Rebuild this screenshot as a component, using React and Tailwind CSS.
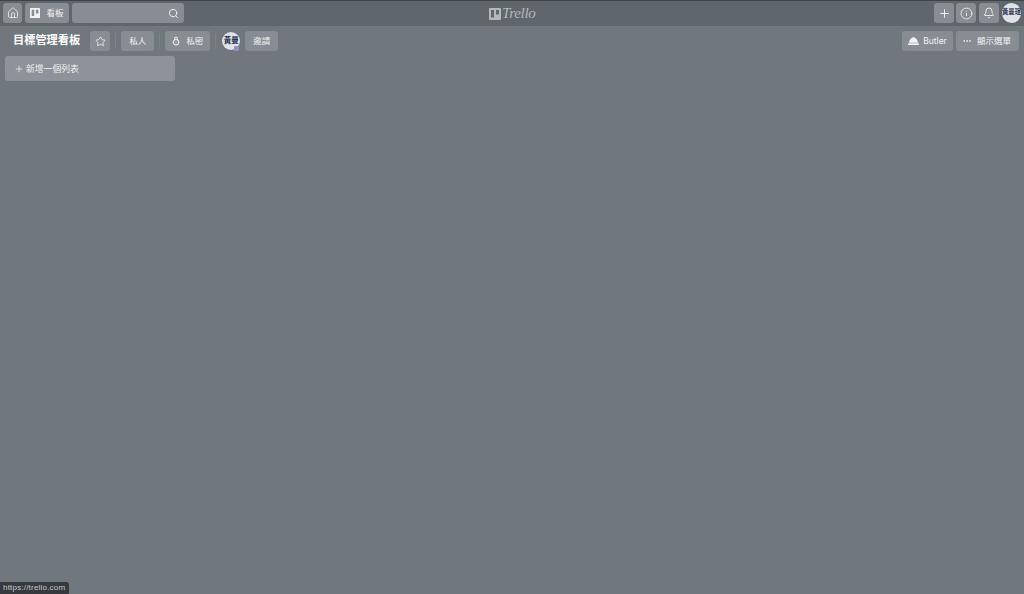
import React from 'react';
import { Home, Search, Star, Plus, Info, Bell, Ellipsis } from 'lucide-react';

const cjk = "font-['Inter','Noto_Sans_CJK_TC',sans-serif]";

const BarButton = ({ className = '', children }) => (
  <div className={`h-5 rounded-[3px] bg-[#878d92] flex items-center justify-center text-[#f1f2f3] ${className}`}>{children}</div>
);

const Divider = () => <div className="w-px h-4 bg-[#7d8489] mx-[5px]" />;

const BoardGlyph = ({ className }) => (
  <svg viewBox="0 0 12 12" className={className}>
    <path fill="currentColor" fillRule="evenodd" d="M1 0h10a1 1 0 0 1 1 1v10a1 1 0 0 1-1 1H1a1 1 0 0 1-1-1V1a1 1 0 0 1 1-1zM2 2v7.5h3V2zm5 0v4.5h3V2z" />
  </svg>
);

const LockGlyph = () => (
  <svg viewBox="0 0 10 12" className="w-[8px] h-[10px]" fill="none" stroke="currentColor" strokeWidth="1.3">
    <path d="M3.2 4.6V3a1.8 1.8 0 0 1 3.6 0v1.6" />
    <circle cx="5" cy="7.6" r="3.4" />
    <circle cx="5" cy="7.6" r="0.7" fill="currentColor" stroke="none" />
  </svg>
);

const Avatar = ({ className = '', text, children }) => (
  <div className={`relative rounded-full bg-[#dfe1e6] flex items-center justify-center font-bold text-[#1d2a4d] whitespace-nowrap ${className}`}>
    <span>{text}</span>
    {children}
  </div>
);

const App = () => {
  return (
    <div className={`relative w-full h-[594px] overflow-hidden bg-[#70787e] ${cjk}`}>
      <header className="relative h-[26px] bg-[#5f666c] border-t border-[#3e444a] flex items-start justify-between pt-[2px] pl-[3px] pr-[3px]">
        <div className="flex items-center">
          <BarButton className="w-[19px]"><Home className="w-3 h-3" strokeWidth={1.6} /></BarButton>
          <BarButton className="w-[44px] gap-[6px] ml-[3px]">
            <BoardGlyph className="w-[10px] h-[10px]" />
            <span className="text-[8.5px] leading-none">看板</span>
          </BarButton>
          <BarButton className="w-[112px] ml-[3px] justify-end pr-[5px]"><Search className="w-[11px] h-[11px]" strokeWidth={2} /></BarButton>
        </div>
        <div className="absolute left-[489px] top-[5px] flex items-center gap-[1px] text-[#b4b9bc]">
          <BoardGlyph className="w-3 h-3" />
          <span className="font-['Liberation_Serif',serif] italic text-[15px] leading-none tracking-[-0.3px]">Trello</span>
        </div>
        <div className="flex items-center">
          <BarButton className="w-5"><Plus className="w-[13px] h-[13px]" strokeWidth={1.8} /></BarButton>
          <BarButton className="w-5 ml-[2px]"><Info className="w-[13px] h-[13px]" strokeWidth={1.6} /></BarButton>
          <BarButton className="w-5 ml-[3px]"><Bell className="w-3 h-3" strokeWidth={1.8} /></BarButton>
          <Avatar className="w-[19px] h-5 ml-[3px] text-[6.3px]" text="黃曼瑄" />
        </div>
      </header>

      <div className="h-[25px] flex items-end justify-between pl-[13px] pr-[5px]">
        <div className="flex items-center">
          <h1 className="text-[11.2px] font-bold text-white leading-none mr-[10px] whitespace-nowrap">目標管理看板</h1>
          <BarButton className="w-5"><Star className="w-[11px] h-[11px]" strokeWidth={1.8} /></BarButton>
          <Divider />
          <BarButton className="w-[33px] text-[8.5px]">私人</BarButton>
          <Divider />
          <BarButton className="w-[45px] gap-[6px] text-[8.5px]">
            <LockGlyph />
            <span>私密</span>
          </BarButton>
          <Divider />
          <Avatar className="w-[18px] h-[18px] text-[7.5px] ml-[1px] mr-[5px]" text="黃曼">
            <span className="absolute right-[1px] bottom-[-1px] w-[5px] h-[5px] rounded-[1px] bg-[#8f8fc9]" />
          </Avatar>
          <BarButton className="w-[33px] text-[8.5px]">邀請</BarButton>
        </div>
        <div className="flex items-center gap-[3px]">
          <BarButton className="w-[51px] gap-[4px] text-[8.5px]">
            <svg viewBox="0 0 12 9" className="w-[11px] h-[8px]"><path fill="currentColor" d="M6 0C3 1 1.2 3.5 1 6.5h10C10.8 3.5 9 1 6 0zM0 7h12v2H0z" /></svg>
            <span>Butler</span>
          </BarButton>
          <BarButton className="w-[63px] gap-[5px] pr-[2px] text-[8.5px]">
            <Ellipsis className="w-[10px] h-[10px]" strokeWidth={2} />
            <span>顯示選單</span>
          </BarButton>
        </div>
      </div>

      <div className="pl-[5px] pt-[5px]">
        <div className="w-[170px] h-[25px] rounded-[3px] bg-[#8d9398] flex items-center pl-[9px] gap-[2px] text-[#eef0f1] text-[8.8px]">
          <Plus className="w-[10px] h-[10px]" strokeWidth={1.8} />
          <span>新增一個列表</span>
        </div>
      </div>

      <div className="absolute left-0 bottom-0 h-[12px] w-[69px] bg-[#363a3f] rounded-tr-[3px] flex items-center pl-[3px] text-[8px] text-[#c4c7ca] font-['Liberation_Sans',sans-serif] tracking-[0.2px]">
        https://trello.com
      </div>
    </div>
  );
};

export default App;
